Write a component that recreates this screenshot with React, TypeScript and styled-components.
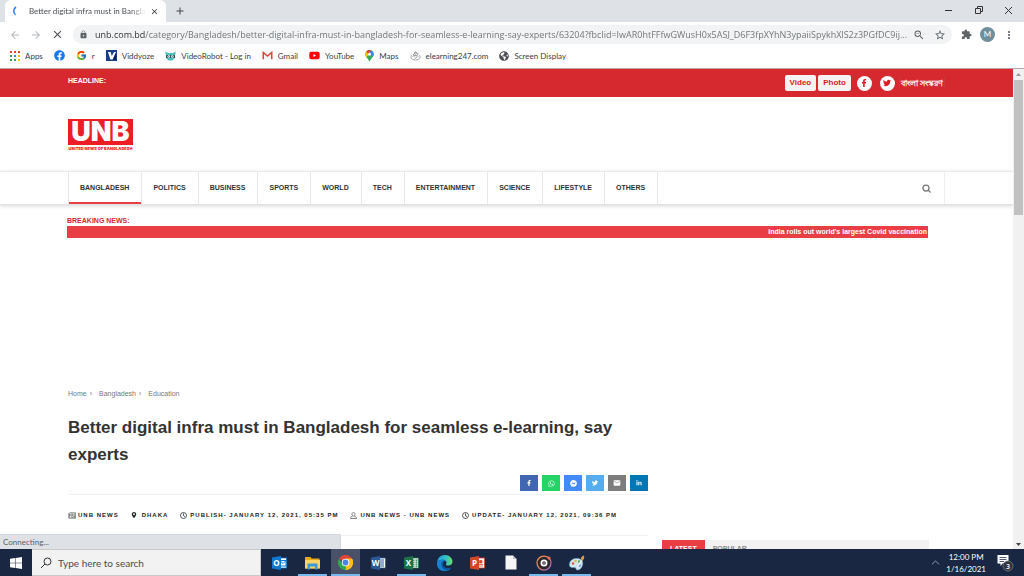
import React from 'react';
import styled, { createGlobalStyle, css } from 'styled-components';
import {
  FaFacebook, FaFacebookF, FaTwitter, FaWhatsapp, FaFacebookMessenger, FaLinkedinIn, FaYoutube, FaMapMarkerAlt, FaGlobeAmericas,
} from 'react-icons/fa';
import { FcGoogle } from 'react-icons/fc';
import { MdLock, MdExtension, MdStarBorder, MdMoreVert, MdEmail, MdOutlineZoomOut, MdArrowBack, MdArrowForward, MdClose, MdAdd } from 'react-icons/md';
import { ChevronUp } from 'lucide-react';

const ui = `Lato, "Open Sans", sans-serif`;
const sans = `"Liberation Sans", Arial, sans-serif`;

const GlobalStyle = createGlobalStyle`
  *, *::before, *::after { box-sizing: border-box; }
  body { margin: 0; overflow: hidden; background: #fff; font-family: ${sans}; color: #333; }
  a { color: inherit; text-decoration: none; }
  button, input { font: inherit; color: inherit; border: 0; padding: 0; margin: 0; background: none; outline: none; }
  svg { display: block; flex: none; }
`;

const Desktop = styled.div`
  display: flex;
  flex-direction: column;
  height: 100vh;
`;

/* Browser frame */
const TabStrip = styled.header`
  display: flex;
  align-items: stretch;
  height: 22px;
  padding-left: 5px;
  background: #dee1e6;
  font-family: ${ui};
`;
const Tab = styled.div`
  display: flex;
  align-items: center;
  width: 161px;
  padding: 0 7px 0 6px;
  border-radius: 6px 6px 0 0;
  background: #fff;
  font-size: 8px;
  color: #4a4f55;
`;
const TabTitle = styled.span`
  flex: 1;
  margin: 0 4px 0 8px;
  white-space: nowrap;
  mask-image: linear-gradient(to right, #000 86%, transparent);
`;
const IconButton = styled.button<{ $tone?: string }>`
  display: flex;
  align-items: center;
  justify-content: center;
  color: ${(p) => p.$tone ?? '#5f6368'};
`;
const NewTab = styled(IconButton)`
  width: 28px;
  color: #44484c;
`;
const WindowControls = styled.div`
  display: flex;
  align-items: center;
  gap: 20px;
  margin-left: auto;
  padding-right: 11px;
  padding-bottom: 2px;
  color: #333;
`;
const Toolbar = styled.div`
  display: flex;
  align-items: center;
  height: 25px;
  padding: 0 9px;
  gap: 9px;
  background: #fff;
`;
const ToolbarEnd = styled.div`
  display: flex;
  align-items: center;
  gap: 8px;
`;
const AddressBar = styled.form`
  display: flex;
  flex: 1;
  align-items: center;
  height: 19px;
  padding: 0 6px;
  gap: 9px;
  border-radius: 10px;
  background: #f1f3f4;
`;
const AddressInput = styled.input`
  flex: 1;
  min-width: 0;
  margin: 0 -6px 0 -2px;
  height: 19px;
  font-family: "Open Sans", sans-serif;
  font-size: 9px;
  color: transparent;
  background: linear-gradient(to right, #2c2f33 50px, #6d7175 50px);
  background-clip: text;
`;
const Avatar = styled.button`
  width: 15px;
  height: 15px;
  border-radius: 50%;
  background: #718e9b;
  color: #fff;
  font-family: ${ui};
  font-size: 8px;
  line-height: 15px;
`;
const Bookmarks = styled.nav`
  display: flex;
  align-items: center;
  height: 22px;
  padding: 0 10px 4px;
  gap: 11px;
  border-bottom: 1px solid #b9a5a8;
  background: #fff;
  font-family: ${ui};
  font-size: 8px;
  color: #3c4043;
`;
const Bookmark = styled.a`
  display: flex;
  align-items: center;
  gap: 5px;
  white-space: nowrap;
`;
const Viewport = styled.div`
  position: relative;
  display: flex;
  flex: 1;
  min-height: 0;
`;
const StatusBubble = styled.div`
  position: absolute;
  left: 0;
  bottom: 0;
  width: 341px;
  height: 15px;
  padding-left: 3px;
  border: 1px solid #d3d6db;
  border-width: 1px 1px 0 0;
  border-radius: 0 2px 0 0;
  background: #dee1e6;
  font: 8px/14px ${ui};
  color: #5b6066;
`;
const Scrollbar = styled.div`
  display: flex;
  flex-direction: column;
  align-items: center;
  justify-content: space-between;
  width: 11px;
  padding: 4px 0 3px;
  background: #f1f1f1;
`;
const ScrollThumb = styled.div`
  width: 9px;
  height: 135px;
  margin: 4px 0 auto;
  background: #c1c1c1;
`;

/* News page */
const Page = styled.div`
  flex: 1;
  min-width: 0;
  overflow: hidden;
  background: #fff;
`;
const gutter = css`padding-left: 68px; padding-right: 68px;`;
const HeadlineBar = styled.div`
  ${gutter}
  display: flex;
  align-items: center;
  height: 28px;
  background: #d5282f;
  color: #fff;
`;
const HeadlineLabel = styled.strong`
  margin-right: auto;
  padding-bottom: 4px;
  font: 700 7px/8px ${sans};
`;
const MediaLink = styled.a`
  height: 16px;
  margin-right: 2px;
  padding: 0 5px;
  border-radius: 2px;
  background: #f4f2f2;
  color: #e01a22;
  font: 700 8px/16px ${sans};
`;
const RoundLink = styled.a`
  display: flex;
  align-items: center;
  justify-content: center;
  width: 15px;
  height: 15px;
  margin: 0 4px;
  border-radius: 50%;
  background: #fff;
  color: #e01a22;
`;
const LanguageLink = styled.a`
  padding: 0 1px;
  border: 1px solid #c9363c;
  border-width: 0 1px;
  font: 700 8px/12px "Open Sans", "Noto Sans", sans-serif;
`;
const LogoRow = styled.div`
  ${gutter}
  display: flex;
  align-items: center;
  height: 74px;
  padding-top: 2px;
`;
const Logo = styled.a`
  display: block;
  width: 65px;
  color: #ee1c25;
  text-align: center;
  font-family: Inter, ${sans};
  font-weight: 900;
`;
const LogoName = styled.span`
  display: block;
  height: 26px;
  background: #ee1c25;
  color: #fff;
  font-size: 27px;
  line-height: 26px;
`;
const LogoTagline = styled.span`
  display: block;
  font-size: 4px;
  line-height: 7px;
  white-space: nowrap;
`;
const NavBar = styled.nav`
  ${gutter}
  display: flex;
  height: 34px;
  border-top: 1px solid #ececec;
  border-bottom: 1px solid #e2e2e2;
  box-shadow: 0 1px 4px rgba(0, 0, 0, 0.16);
`;
const NavLink = styled.a<{ $active?: boolean }>`
  padding: 0 12px 0 11px;
  border-right: 1px solid #e8e8e8;
  font: 700 7px/32px ${sans};
  color: #333;
  ${(p) => p.$active && css`
    border-left: 1px solid #e8e8e8;
    box-shadow: inset 0 -2px #e83e44;
  `}
`;
const NavSearch = styled(IconButton)`
  margin-left: auto;
  padding: 0 13px;
  border-right: 1px solid #f0f0f0;
  color: #777;
`;
const Breaking = styled.section`
  margin: 10px 85px 0 67px;
`;
const BreakingLabel = styled.h2`
  margin: 0;
  font: 700 7px/11px ${sans};
  color: #d5282f;
`;
const Ticker = styled.p`
  margin: 0;
  padding-right: 1px;
  background: #e83e44;
  color: #fff;
  text-align: right;
  font: 700 7px/12px ${sans};
`;
const Columns = styled.div`
  display: flex;
  align-items: flex-end;
  gap: 14px;
  margin: 150px 84px 0 68px;
`;
const Article = styled.main`
  flex: 1;
  min-width: 0;
`;
const Breadcrumb = styled.nav`
  display: flex;
  font-size: 7px;
  line-height: 12px;
  color: #777;
  a + a::before { content: '›'; margin: 0 7px 0 3px; }
`;
const Title = styled.h1`
  margin: 14px 0 7px;
  font: 700 17px/27px ${sans};
  color: #333;
`;
const ShareRow = styled.div`
  display: flex;
  justify-content: flex-end;
  gap: 4px;
  padding-bottom: 3px;
  border-bottom: 1px solid #f2f2f2;
`;
const ShareButton = styled.button<{ $bg: string }>`
  display: flex;
  align-items: center;
  justify-content: center;
  width: 18px;
  height: 16px;
  background: ${(p) => p.$bg};
  color: #fff;
`;
const MetaRow = styled.div`
  display: flex;
  align-items: center;
  gap: 12px;
  height: 41px;
  border-bottom: 1px solid #f2f2f2;
  font: 700 6px/8px ${sans};
  letter-spacing: 1px;
  white-space: nowrap;
  color: #222;
`;
const Meta = styled.span<{ $gap?: number }>`
  display: flex;
  align-items: center;
  gap: ${(p) => p.$gap ?? 3}px;
`;
const Embed = styled.div`
  width: 273px;
  height: 14px;
  border-right: 1px solid #ddd;
`;
const SideTabs = styled.aside`
  display: flex;
  width: 267px;
  height: 10px;
  background: #f2f2f2;
`;
const SideTab = styled.button<{ $active?: boolean }>`
  height: 18px;
  padding: 0 8px;
  background: ${(p) => (p.$active ? '#e83e44' : 'transparent')};
  color: ${(p) => (p.$active ? '#fff' : '#888')};
  font: 700 7px/18px ${sans};
`;

/* Taskbar */
const Taskbar = styled.footer`
  display: flex;
  height: 27px;
  background: #1a2743;
  color: #fff;
  font-family: ${ui};
`;
const StartButton = styled(IconButton)`
  width: 32px;
  color: #fff;
`;
const SearchBox = styled.label`
  display: flex;
  align-items: center;
  width: 229px;
  padding-left: 8px;
  gap: 6px;
  border: 1px solid #c9c9c9;
  border-left: 0;
  background: #f2f2f2;
  color: #333;
`;
const SearchInput = styled.input`
  flex: 1;
  min-width: 0;
  font-size: 10px;
  &::placeholder { color: #4c4c4c; opacity: 1; }
`;
const Apps = styled.div`
  display: flex;
  gap: 4px;
  padding-left: 4px;
`;
const AppButton = styled.button<{ $open?: boolean; $current?: boolean }>`
  display: flex;
  align-items: center;
  justify-content: center;
  width: 29px;
  background: ${(p) => (p.$current ? '#495169' : 'transparent')};
  box-shadow: ${(p) => (p.$open ? 'inset 0 -2px #76b9ed' : 'none')};
`;
const Tray = styled.div`
  display: flex;
  align-items: center;
  margin-left: auto;
  padding-right: 10px;
`;
const TrayClock = styled.time`
  margin: 0 11px 0 4px;
  text-align: center;
  font-size: 8px;
  line-height: 12px;
`;

const AppsGrid = () => (
  <svg width="10" height="10" viewBox="0 0 10 10">
    {['#ea4335', '#ea4335', '#ea4335', '#34a853', '#4285f4', '#fbbc04', '#34a853', '#34a853', '#fbbc04'].map((c, i) => (
      <rect key={i} x={(i % 3) * 4} y={Math.floor(i / 3) * 4} width="2" height="2" fill={c} />
    ))}
  </svg>
);
const ViddyozeIcon = () => (
  <svg width="11" height="11" viewBox="0 0 11 11">
    <rect width="11" height="11" fill="#173f8a" />
    <path d="M2 2h2.600l1.200 4L8 2h2L6.600 9.500H4.400z" fill="#fff" />
    <path d="M7 9.500 10 3v6.500z" fill="#0c1f4c" />
  </svg>
);
const RobotIcon = () => (
  <svg width="11" height="10" viewBox="0 0 22 20">
    <path d="M1 1l5 3h10l5-3v6l-2 2v6l-4 4H7l-4-4V9L1 7z" fill="#49c2bb" />
    <path d="M2 8h18v6H2z" fill="#2f5a62" />
    <circle cx="7.500" cy="11" r="2.500" fill="#fff" /><circle cx="14.500" cy="11" r="2.500" fill="#fff" />
    <circle cx="7.500" cy="11" r="1" fill="#2f5a62" /><circle cx="14.500" cy="11" r="1" fill="#2f5a62" />
  </svg>
);
const GmailIcon = () => (
  <svg width="11" height="9" viewBox="0 0 22 17">
    <path d="M2 1h18v15H2z" fill="#f4f4f4" />
    <path d="M2.500 16V2.500L11 9.500l8.500-7V16" fill="none" stroke="#d9453a" strokeWidth="3" />
  </svg>
);
const MapsPin = () => (
  <svg width="9" height="12" viewBox="0 0 18 24">
    <path d="M9 0a8.500 8.500 0 0 1 8.500 8.500C17.500 14 11 17 9 24 7 17 .5 14 .5 8.500A8.500 8.500 0 0 1 9 0z" fill="#34a853" />
    <path d="M.5 8.500A8.500 8.500 0 0 1 2.500 3l5 5-4.500 7C1.500 13 .5 11 .5 8.500z" fill="#fbbc04" />
    <path d="M2.500 3A8.500 8.500 0 0 1 9 0l3 .5L7 8z" fill="#ea4335" />
    <path d="M12 .5a8.500 8.500 0 0 1 5.500 8l-1 4L9 8z" fill="#4285f4" />
    <circle cx="9" cy="8.500" r="3" fill="#fff" />
  </svg>
);
const LearningIcon = () => (
  <svg width="11" height="10" viewBox="0 0 22 20" fill="none" stroke="#888" strokeWidth="1.500">
    <path d="M3 8c-3 5 0 10 8 10s11-5 8-10M6 8l5-5 6 3-4 3zM5 11c3-2 9-2 12 0M8 13l2 2 4-3" />
    <circle cx="11" cy="4" r="2" />
  </svg>
);
const ClockIcon = () => (
  <svg width="7" height="7" viewBox="0 0 14 14" fill="none" stroke="#222" strokeWidth="1.500">
    <circle cx="7" cy="7" r="6" /><path d="M7 3v4.500l3 1.500" />
  </svg>
);
const PersonIcon = () => (
  <svg width="7" height="7" viewBox="0 0 14 14" fill="none" stroke="#444" strokeWidth="1.300">
    <path d="M7 1c2 0 3 1.500 3 3.500S9 8 7 8 4 6.500 4 4.500 5 1 7 1zM5 8.500c-2 .5-4 1.500-4 4.500h12c0-3-2-4-4-4.500" />
  </svg>
);
const PaperIcon = () => (
  <svg width="8" height="7" viewBox="0 0 16 14" fill="none" stroke="#333" strokeWidth="1.100">
    <path d="M3 1.500h12v11H2c-1 0-1.500-1-1.500-2v-7H3v8M5.500 4h4v4h-4zM11 4h3M11 6.500h3M11 9h3M5.500 10.500H14" />
  </svg>
);
const SearchIcon = () => (
  <svg width="9" height="9" viewBox="0 0 18 18" fill="none" stroke="#777" strokeWidth="2.500">
    <circle cx="8" cy="8" r="6" /><path d="m12 12 5 5" />
  </svg>
);
const WindowsLogo = () => (
  <svg width="12" height="12" viewBox="0 0 24 24" fill="#fff">
    <path d="M0 3.500 10.500 2v9.500H0zM11.500 1.900 24 0v11.500H11.500zM0 12.500h10.500V22L0 20.500zM11.500 12.500H24V24l-12.500-1.800z" />
  </svg>
);
const OfficeIcon = ({ letter, color, kind }: { letter: string; color: string; kind: string }) => (
  <svg width="15" height="14" viewBox="0 0 30 28">
    <rect x="14" y="4" width="15" height="20" fill="#fff" stroke={color} strokeWidth="1.500" />
    {kind === 'mail' && <path d="M15 9h13v11H15z M15 9l7 6 6-6" fill="#fff" stroke={color} strokeWidth="2" />}
    {kind === 'lines' && <path d="M17 8h9M17 12h9M17 16h9M17 20h9" stroke={color} strokeWidth="2" />}
    {kind === 'grid' && <path d="M18 8h3M23 8h4M18 12h3M23 12h4M18 16h3M23 16h4M18 20h3M23 20h4" stroke={color} strokeWidth="2.500" />}
    {kind === 'slide' && <path d="M19 9h5v5h-5zM18 17h8M18 20h8" fill={color} stroke={color} strokeWidth="1.500" />}
    <path d="M0 3 18 0v28L0 25z" fill={color} />
    <text x="9" y="20" textAnchor="middle" fontFamily="Open Sans, sans-serif" fontWeight="700" fontSize="16" fill="#fff">{letter}</text>
  </svg>
);
const FolderIcon = () => (
  <svg width="15" height="14" viewBox="0 0 30 28">
    <path d="M0 2h11l2 3h16v20H0z" fill="#e9a820" />
    <path d="M0 8h30v17H0z" fill="#fcd462" />
    <path d="M5 27V15h20v12h-5v-6H10v6z" fill="#3f97dc" />
  </svg>
);
const ChromeIcon = () => (
  <svg width="15" height="15" viewBox="0 0 30 30">
    <path d="M15 15 2 7.500A15 15 0 0 1 28 7.500z" fill="#e0443a" />
    <path d="M15 15V7.500h13A15 15 0 0 1 15 30z" fill="#fbc116" />
    <path d="M15 15v15A15 15 0 0 1 2 7.500l6.500 11z" fill="#2da94f" />
    <path d="m21.500 18.500-6.500 11.500a15 15 0 0 0 13-22.500H15z" fill="#fbc116" />
    <circle cx="15" cy="15" r="7.500" fill="#fff" /><circle cx="15" cy="15" r="5.800" fill="#4b83ec" />
  </svg>
);
const EdgeIcon = () => (
  <svg width="17" height="16" viewBox="0 0 32 32">
    <defs>
      <linearGradient id="edgeTop" x1="0" x2="1"><stop offset="0" stopColor="#1f9fe0" /><stop offset=".6" stopColor="#35c1c9" /><stop offset="1" stopColor="#6be05a" /></linearGradient>
    </defs>
    <path d="M1 15C2 6 8 0 17 0c9 0 15 7 15 13 0 5-4 8-8 8-4 0-6-1-5-3 2-2 1-7-4-8C9 9 3 11 1 15z" fill="url(#edgeTop)" />
    <path d="M1 15c2-4 8-6 12-5 2 0 3 1 4 2-7 1-8 15 5 16 3 0 6-1 8-3-3 5-8 7-14 7C7 32 0 25 1 15z" fill="#1783d2" />
    <path d="M11 14c-4 7 1 16 10 16 4-1 7-3 9-5-6 3-16 2-17-7 0-2 1-4 3-6-2 0-4 0-5 2z" fill="#0d559f" />
  </svg>
);
const FileIcon = () => (
  <svg width="12" height="15" viewBox="0 0 24 30"><path d="M1 1h15l7 7v21H1z" fill="#f5f5f5" /><path d="M16 1v7h7z" fill="#b9bcc3" /></svg>
);
const DiscIcon = () => (
  <svg width="16" height="16" viewBox="0 0 32 32">
    <defs><linearGradient id="ring" x1="0" x2="1" y2="1"><stop offset="0" stopColor="#f09a4a" /><stop offset=".5" stopColor="#e8776c" /><stop offset="1" stopColor="#8b6ad8" /></linearGradient></defs>
    <circle cx="16" cy="16" r="14" fill="#2b2628" stroke="url(#ring)" strokeWidth="2.500" />
    <circle cx="16" cy="16" r="7" fill="#fff" /><circle cx="16" cy="16" r="3.500" fill="#222" /><circle cx="16" cy="16" r="1.500" fill="#fff" />
    <circle cx="26" cy="6" r="3" fill="#f0705c" />
  </svg>
);
const PaletteIcon = () => (
  <svg width="16" height="16" viewBox="0 0 32 32">
    <path d="M1 18C2 9 11 6 18 7s11 6 9 13c-1 6-6 10-10 10s-2-5-6-5-11 1-10-7z" fill="#cfe6f3" stroke="#7daac8" />
    <circle cx="8" cy="17" r="2.400" fill="#e0503f" /><circle cx="13" cy="12" r="2.400" fill="#efb325" /><circle cx="20" cy="13" r="2.400" fill="#4fae4e" /><circle cx="21" cy="21" r="2.400" fill="#3b78cf" />
    <path d="m14 25 10-15 3 1-10 16z" fill="#f5f5f5" stroke="#9aa7b0" strokeWidth=".6" /><path d="M24 9c-1-4 2-7 6-8 1 4 0 8-3 10z" fill="#d99a4a" />
  </svg>
);
const Notifications = () => (
  <svg width="17" height="18" viewBox="0 0 34 36">
    <path d="M1 2h22v17H11l-4 5v-5H1z" fill="#fff" /><path d="M5 7h14M5 11h14M5 15h9" stroke="#1a2743" strokeWidth="1.500" />
    <circle cx="22" cy="24" r="10" fill="#30343d" stroke="#787d88" strokeWidth="1.500" />
    <text x="22" y="29" textAnchor="middle" fontFamily="Open Sans, sans-serif" fontWeight="600" fontSize="14" fill="#fff">3</text>
  </svg>
);

const bookmarks = [
  { label: 'Apps', icon: <AppsGrid /> },
  { label: '', icon: <FaFacebook size={11} color="#1877f2" /> },
  { label: 'r', icon: <FcGoogle size={11} /> },
  { label: 'Viddyoze', icon: <ViddyozeIcon /> },
  { label: 'VideoRobot - Log in', icon: <RobotIcon /> },
  { label: 'Gmail', icon: <GmailIcon /> },
  { label: 'YouTube', icon: <FaYoutube size={11} color="#f00" /> },
  { label: 'Maps', icon: <MapsPin /> },
  { label: 'elearning247.com', icon: <LearningIcon /> },
  { label: 'Screen Display', icon: <FaGlobeAmericas size={10} color="#4d5156" /> },
];
const sections = ['BANGLADESH', 'POLITICS', 'BUSINESS', 'SPORTS', 'WORLD', 'TECH', 'ENTERTAINMENT', 'SCIENCE', 'LIFESTYLE', 'OTHERS'];
const shares = [
  { name: 'Facebook', bg: '#4267b2', icon: <FaFacebookF size={6} /> },
  { name: 'WhatsApp', bg: '#25d366', icon: <FaWhatsapp size={7} /> },
  { name: 'Messenger', bg: '#448aff', icon: <FaFacebookMessenger size={7} /> },
  { name: 'Twitter', bg: '#55acee', icon: <FaTwitter size={6} /> },
  { name: 'Email', bg: '#7d7d7d', icon: <MdEmail size={8} /> },
  { name: 'LinkedIn', bg: '#0077b5', icon: <FaLinkedinIn size={6} /> },
];
const apps = [
  { name: 'Outlook', icon: <OfficeIcon letter="O" color="#0f78cf" kind="mail" /> },
  { name: 'File Explorer', icon: <FolderIcon />, open: true },
  { name: 'Chrome', icon: <ChromeIcon />, open: true, current: true },
  { name: 'Word', icon: <OfficeIcon letter="W" color="#2b5797" kind="lines" /> },
  { name: 'Excel', icon: <OfficeIcon letter="X" color="#1e7145" kind="grid" />, open: true },
  { name: 'Edge', icon: <EdgeIcon /> },
  { name: 'PowerPoint', icon: <OfficeIcon letter="P" color="#d24726" kind="slide" /> },
  { name: 'Document', icon: <FileIcon /> },
  { name: 'Music', icon: <DiscIcon />, open: true },
  { name: 'Paint', icon: <PaletteIcon />, open: true },
];

export default function App() {
  return (
    <Desktop>
      <GlobalStyle />
      <TabStrip>
        <Tab>
          <svg width="10" height="10" viewBox="0 0 10 10" fill="none" stroke="#2f7de9" strokeWidth="1.500"><path d="M5 1A5 5 0 0 0 4.500 9" /></svg>
          <TabTitle>Better digital infra must in Bangla</TabTitle>
          <IconButton aria-label="Close tab" $tone="#333"><MdClose size={9} /></IconButton>
        </Tab>
        <NewTab aria-label="New tab"><MdAdd size={12} /></NewTab>
        <WindowControls>
          <IconButton aria-label="Minimize"><svg width="10" height="10" stroke="#333"><path d="M1 5.500h7" /></svg></IconButton>
          <IconButton aria-label="Restore"><svg width="10" height="10" fill="none" stroke="#333"><path d="M1.500 3.500h5v5h-5zM3.500 3V1.500h5v5H7" /></svg></IconButton>
          <IconButton aria-label="Close"><svg width="9" height="9" stroke="#333"><path d="m1 1 7 7M8 1 1 8" /></svg></IconButton>
        </WindowControls>
      </TabStrip>
      <Toolbar>
        <IconButton aria-label="Back" $tone="#b5b8bb"><MdArrowBack size={12} /></IconButton>
        <IconButton aria-label="Forward" $tone="#b5b8bb"><MdArrowForward size={12} /></IconButton>
        <IconButton aria-label="Stop loading" $tone="#4a4e52"><MdClose size={13} /></IconButton>
        <AddressBar>
          <MdLock size={9} color="#5f6368" />
          <AddressInput
            aria-label="Address"
            defaultValue="unb.com.bd/category/Bangladesh/better-digital-infra-must-in-bangladesh-for-seamless-e-learning-say-experts/63204?fbclid=IwAR0htFFfwGWusH0x5ASJ_D6F3fpXYhN3ypaiiSpykhXlS2z3PGfDC9ij..."
          />
          <IconButton type="button" aria-label="Zoom"><MdOutlineZoomOut size={12} /></IconButton>
          <IconButton type="button" aria-label="Bookmark this page"><MdStarBorder size={12} /></IconButton>
        </AddressBar>
        <ToolbarEnd>
          <IconButton aria-label="Extensions"><MdExtension size={11} /></IconButton>
          <Avatar aria-label="Profile">M</Avatar>
          <IconButton aria-label="Menu"><MdMoreVert size={12} /></IconButton>
        </ToolbarEnd>
      </Toolbar>
      <Bookmarks>
        {bookmarks.map((b, i) => (
          <Bookmark key={i} href="#">{b.icon}{b.label && <span>{b.label}</span>}</Bookmark>
        ))}
      </Bookmarks>

      <Viewport>
        <Page>
          <HeadlineBar>
            <HeadlineLabel>HEADLINE:</HeadlineLabel>
            <MediaLink href="#">Video</MediaLink>
            <MediaLink href="#">Photo</MediaLink>
            <RoundLink href="#" aria-label="Facebook"><FaFacebookF size={8} /></RoundLink>
            <RoundLink href="#" aria-label="Twitter"><FaTwitter size={8} /></RoundLink>
            <LanguageLink href="#" lang="bn">বাংলা সংস্করণ</LanguageLink>
          </HeadlineBar>
          <LogoRow>
            <Logo href="#">
              <LogoName>UNB</LogoName>
              <LogoTagline>UNITED NEWS OF BANGLADESH</LogoTagline>
            </Logo>
          </LogoRow>
          <NavBar>
            {sections.map((s, i) => <NavLink key={s} href="#" $active={i === 0}>{s}</NavLink>)}
            <NavSearch aria-label="Search"><SearchIcon /></NavSearch>
          </NavBar>
          <Breaking>
            <BreakingLabel>BREAKING NEWS:</BreakingLabel>
            <Ticker>India rolls out world's largest Covid vaccination</Ticker>
          </Breaking>
          <Columns>
            <Article>
              <Breadcrumb><a href="#">Home</a><a href="#">Bangladesh</a><a href="#">Education</a></Breadcrumb>
              <Title>Better digital infra must in Bangladesh for seamless e-learning, say experts</Title>
              <ShareRow>
                {shares.map((s) => <ShareButton key={s.name} aria-label={s.name} $bg={s.bg}>{s.icon}</ShareButton>)}
              </ShareRow>
              <MetaRow>
                <Meta $gap={2}><PaperIcon />UNB NEWS</Meta>
                <Meta $gap={5}><FaMapMarkerAlt size={6} />DHAKA</Meta>
                <Meta><ClockIcon />PUBLISH- JANUARY 12, 2021, 05:35 PM</Meta>
                <Meta><PersonIcon />UNB NEWS - UNB NEWS</Meta>
                <Meta><ClockIcon />UPDATE- JANUARY 12, 2021, 09:36 PM</Meta>
              </MetaRow>
              <Embed />
            </Article>
            <SideTabs>
              <SideTab $active>LATEST</SideTab>
              <SideTab>POPULAR</SideTab>
            </SideTabs>
          </Columns>
        </Page>
        <Scrollbar>
          <svg width="5" height="3"><path d="M0 3h5L2.500 0z" fill="#999" /></svg>
          <ScrollThumb />
          <svg width="5" height="3"><path d="M0 0h5L2.500 3z" fill="#444" /></svg>
        </Scrollbar>
        <StatusBubble role="status">Connecting...</StatusBubble>
      </Viewport>

      <Taskbar>
        <StartButton aria-label="Start"><WindowsLogo /></StartButton>
        <SearchBox>
          <svg width="12" height="12" viewBox="0 0 12 12" fill="none" stroke="#333"><circle cx="7.500" cy="4.500" r="3.500" /><path d="M5 7 1 11" /></svg>
          <SearchInput aria-label="Search" placeholder="Type here to search" />
        </SearchBox>
        <Apps>
          {apps.map((a) => <AppButton key={a.name} aria-label={a.name} $open={a.open} $current={a.current}>{a.icon}</AppButton>)}
        </Apps>
        <Tray>
          <ChevronUp size={13} strokeWidth={1} />
          <TrayClock>12:00 PM<br />1/16/2021</TrayClock>
          <Notifications />
        </Tray>
      </Taskbar>
    </Desktop>
  );
}
